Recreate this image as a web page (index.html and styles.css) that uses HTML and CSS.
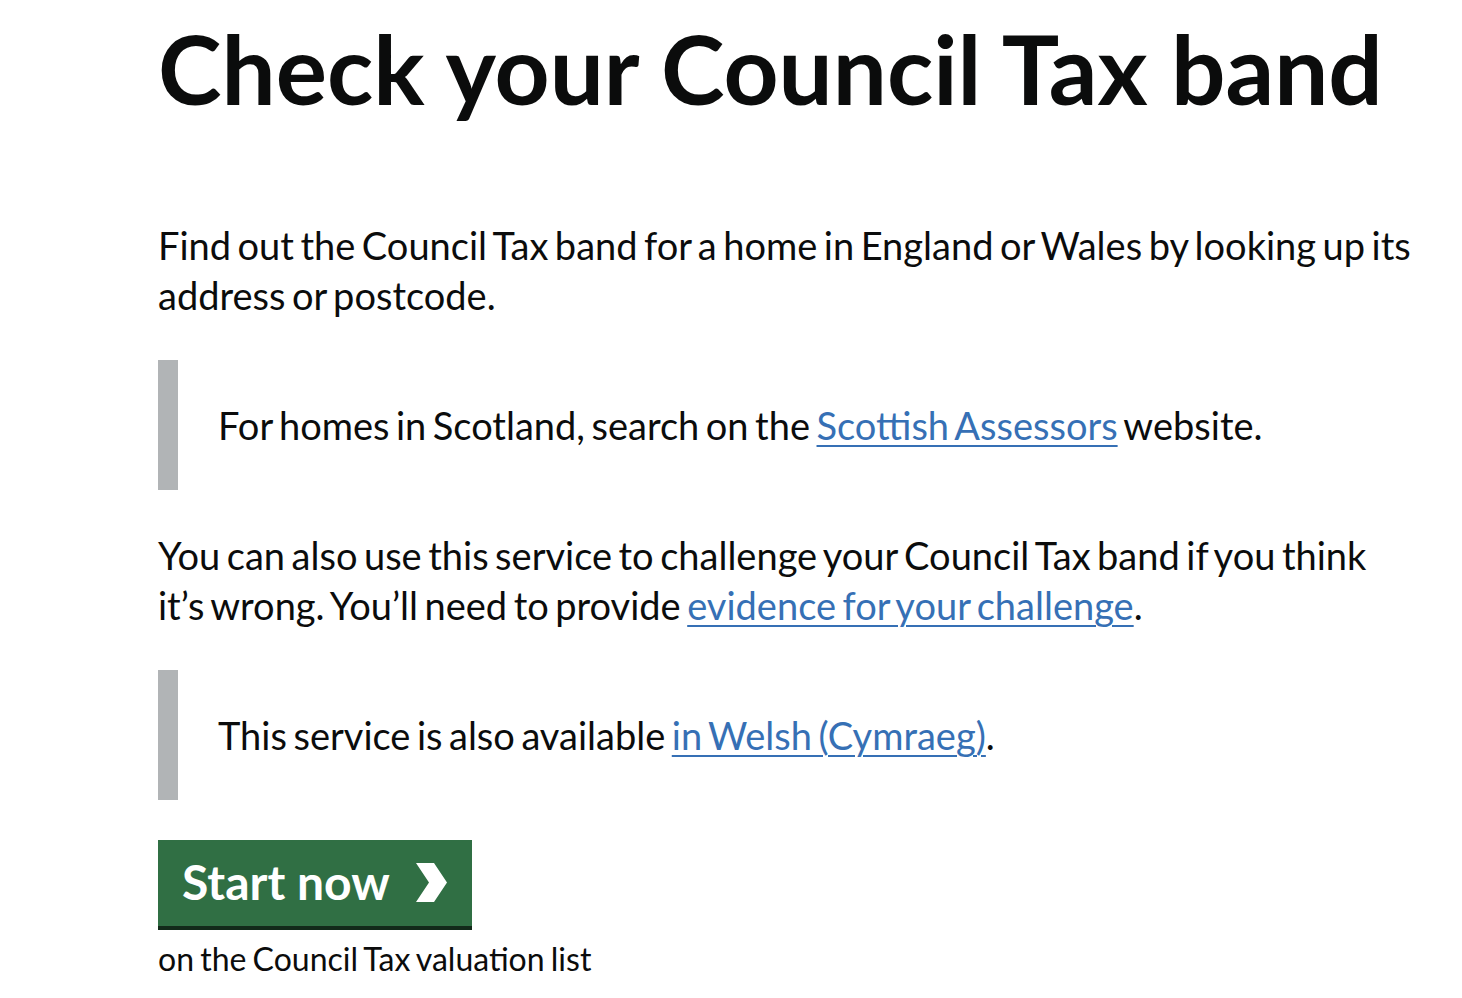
FILE: index.html
```html
<!doctype html>
<html lang="en">
<head>
	<meta charset="UTF-8">
	<title>Check your Council Tax band</title>
	<link rel="stylesheet" href="styles.css">
</head>
<body>
<div class="main">
	<h1 class="title">Check your Council Tax band</h1>

	<p class="body">Find out the Council Tax band for a home in England or Wales by looking up its address or postcode.</p>

	<div class="inset">
		For homes in Scotland, search on the <a href="#" class="link">Scottish Assessors</a> website.
	</div>

	<p class="body">You can also use this service to challenge your Council Tax band if you think it’s wrong. You’ll need to provide <a href="#" class="link">evidence for your challenge</a>.</p>

	<div class="inset">
		This service is also available <a href="#" class="link">in Welsh (Cymraeg)</a>.
	</div>

	<a href="#" class="start">
		<span>Start now</span>
		<svg class="start-icon" width="31" height="39" viewBox="0 0 31 39"><path fill="currentColor" d="M0 0h18l13 19.5-13 19.5H0l13-19.5z"/></svg>
	</a>

	<p class="small">on the Council Tax valuation list</p>
</div>
</body>
</html>
```
FILE: styles.css
```css
body{
	margin: 0;
	background: #fff;
	color: #0b0c0c;
	font-family: Lato, "Liberation Sans", sans-serif;
}
.main{
	width: 1256px;
	padding: 18px 0 0 158px;
}
.title{
	margin: 0 0 102px;
	font-size: 96px;
	line-height: 100px;
	font-weight: 700;
}
.body,
.inset{
	font-size: 38px;
	line-height: 50px;
	word-spacing: -3.2px;
}
.body{
	margin: 0 0 40px;
}
.inset{
	margin: 40px 0;
	padding: 40px;
	border-left: 20px solid #b1b4b6;
}
.link{
	color: #3670b5;
	text-decoration: underline;
	text-decoration-thickness: 2px;
	text-underline-offset: 5px;
}
.start{
	display: inline-flex;
	align-items: center;
	gap: 26px;
	padding: 18px 25px 20px 24px;
	background: #306f44;
	color: #fff;
	text-decoration: none;
	font-size: 48px;
	line-height: 48px;
	font-weight: 700;
	box-shadow: 0 4px 0 #122a1a;
}
.start-icon{
	display: block;
}
.small{
	margin: 13px 0 0;
	font-size: 32px;
	line-height: 40px;
	word-spacing: -2px;
}
```
